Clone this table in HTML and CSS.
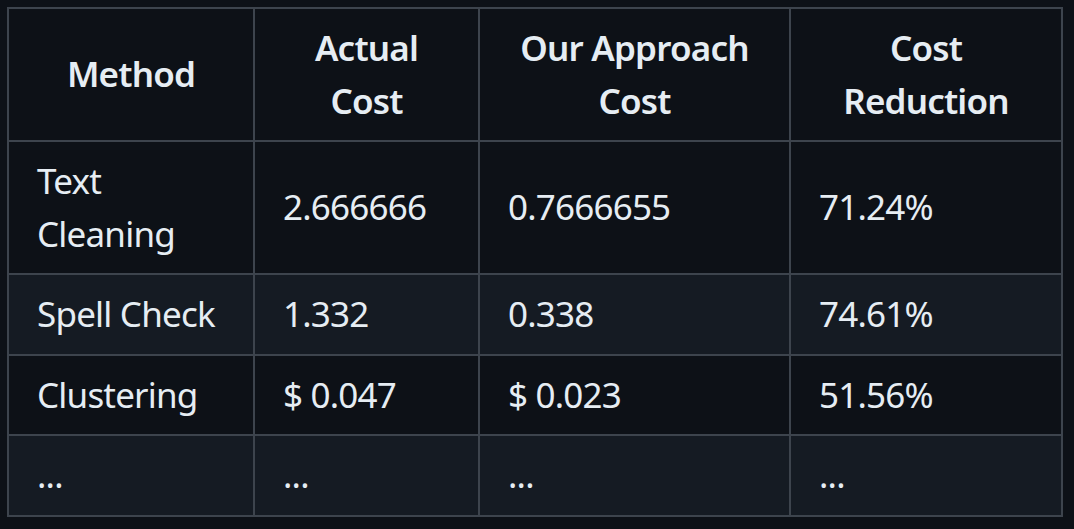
FILE: index.html
```html
<!DOCTYPE html>
<html>
<head>
<meta charset="utf-8">
<link rel="stylesheet" href="styles.css">
</head>
<body>
<div class="wrap">
<table class="cost-table">
  <colgroup>
    <col class="c1"><col class="c2"><col class="c3"><col class="c4">
  </colgroup>
  <thead>
    <tr><th>Method</th><th>Actual Cost</th><th>Our Approach Cost</th><th>Cost Reduction</th></tr>
  </thead>
  <tbody>
    <tr><td>Text Cleaning</td><td>2.666666</td><td>0.7666655</td><td>71.24%</td></tr>
    <tr><td>Spell Check</td><td>1.332</td><td>0.338</td><td>74.61%</td></tr>
    <tr><td>Clustering</td><td>$ 0.047</td><td>$ 0.023</td><td>51.56%</td></tr>
    <tr><td>...</td><td>...</td><td>...</td><td>...</td></tr>
  </tbody>
</table>
</div>
</body>
</html>
```
FILE: styles.css
```css
html, body {
  margin: 0;
  background: #0d1117;
}
.wrap {
  padding: 7px 0 0 7px;
}
.cost-table {
  border-collapse: collapse;
  table-layout: fixed;
  width: 1054px;
  font-family: "Noto Sans", "Open Sans", sans-serif;
  font-size: 35px;
  letter-spacing: -0.8px;
  line-height: 52.5px;
  color: #e6edf3;
}
.c1 { width: 246px; }
.c2 { width: 225px; }
.c3 { width: 311px; }
.c4 { width: 272px; }
.cost-table th,
.cost-table td {
  border: 2px solid #3d444d;
  padding: 13px 28px;
  vertical-align: middle;
}
.cost-table th {
  font-weight: 600;
  text-align: center;
}
.cost-table td {
  text-align: left;
  font-weight: 400;
}
.cost-table tbody tr:nth-child(even) {
  background: #151b23;
}
```
